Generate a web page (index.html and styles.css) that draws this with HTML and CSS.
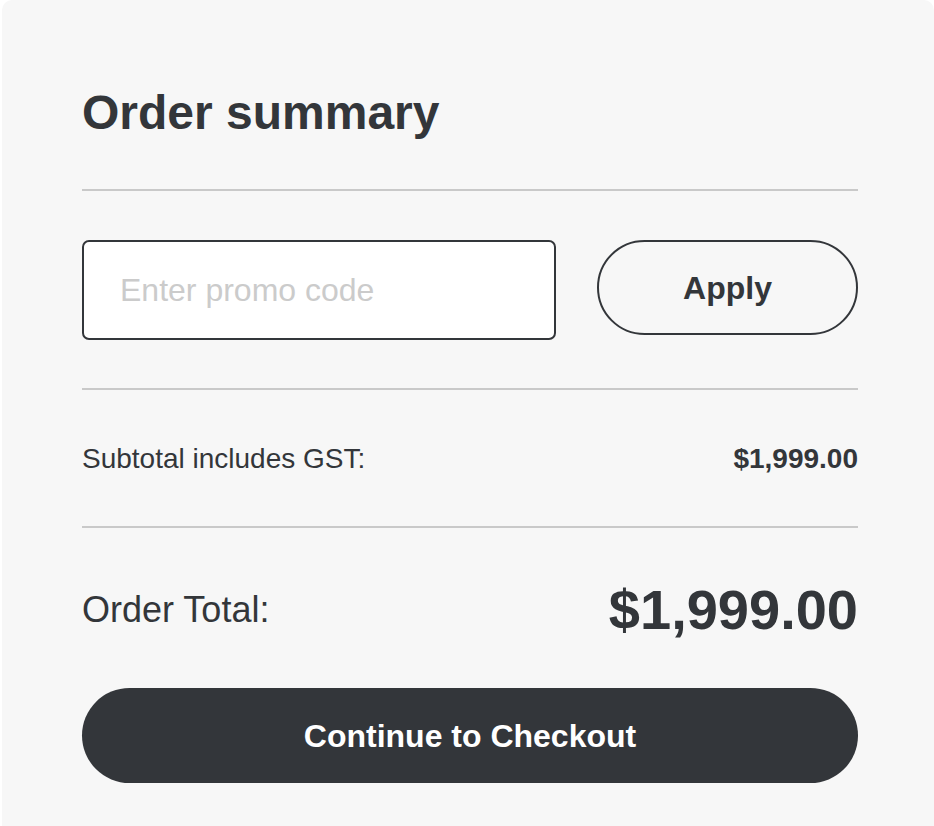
FILE: index.html
```html
<!DOCTYPE html>
<html lang="en">
<head>
<meta charset="UTF-8">
<meta name="viewport" content="width=device-width, initial-scale=1.0">
<title>Order Summary</title>
<link rel="stylesheet" href="styles.css">
</head>
<body>
  <div class="summary">
    <h1>Order summary</h1>
    <div class="rule"></div>

    <form class="promo" id="promo-form">
      <input type="text" class="promo-input" placeholder="Enter promo code">
      <button type="submit" class="btn-outline">Apply</button>
    </form>
    <div class="rule"></div>

    <div class="row subtotal">
      <span>Subtotal includes GST:</span>
      <strong>$1,999.00</strong>
    </div>
    <div class="rule"></div>

    <div class="row total">
      <span>Order Total:</span>
      <strong>$1,999.00</strong>
    </div>

    <button type="button" class="btn-checkout">Continue to Checkout</button>
  </div>
</body>
</html>
```

FILE: styles.css
```css
body {
  margin: 0;
  background: #fff;
  font-family: "Liberation Sans", Arial, sans-serif;
  color: #33363a;
}

.summary {
  margin-left: 2px;
  min-height: 826px;
  box-sizing: border-box;
  background: #f7f7f7;
  border-radius: 10px 10px 0 0;
  padding: 85px 76px 43px 80px;
}

h1 {
  margin: 0 0 48px;
  font-size: 48px;
  line-height: 56px;
  font-weight: bold;
}

/* divider lines */
.rule {
  height: 2px;
  background: #c9c9c9;
}

/* promo code */
.promo {
  display: flex;
  align-items: flex-start;
  gap: 41px;
  margin: 49px 0 48px;
}

.promo-input {
  flex: 1;
  min-width: 0;
  height: 100px;
  box-sizing: border-box;
  border: 2px solid #33363a;
  border-radius: 7px;
  background: #fff;
  padding: 0 36px;
  font-family: inherit;
  font-size: 32px;
  color: #33363a;
  outline: none;
}

.promo-input::placeholder {
  color: #cbcbcb;
}

.btn-outline {
  width: 261px;
  height: 95px;
  padding-top: 3px;
  border: 2px solid #33363a;
  border-radius: 48px;
  background: transparent;
  font-family: inherit;
  font-size: 32px;
  font-weight: bold;
  color: #33363a;
  cursor: pointer;
}

/* price rows */
.row {
  display: flex;
  justify-content: space-between;
  align-items: center;
}

.subtotal {
  padding: 53px 0 51px;
  font-size: 28px;
  line-height: 32px;
}

.total {
  margin: 50px 0 46px;
  height: 64px;
  font-size: 36px;
}

.total strong {
  font-size: 56px;
  line-height: 64px;
}

.btn-checkout {
  display: block;
  width: 100%;
  height: 95px;
  padding-top: 2px;
  border: none;
  border-radius: 48px;
  background: #33363a;
  color: #fff;
  font-family: inherit;
  font-size: 32px;
  font-weight: bold;
  cursor: pointer;
}
```
